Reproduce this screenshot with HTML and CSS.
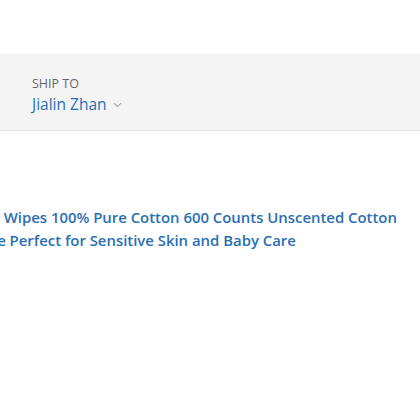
FILE: index.html
```html
<!DOCTYPE html>
<html>
<head>
<meta charset="utf-8">
<link rel="stylesheet" href="styles.css">
</head>
<body>
<header class="bar">
  <div class="ship">
    <div class="ship-label">SHIP TO</div>
    <div class="ship-name">Jialin Zhan <svg class="chev" width="9" height="6" viewBox="0 0 9 6"><path d="M1 1.2 L4.5 4.6 L8 1.2" fill="none" stroke="#9aa" stroke-width="1.1"/></svg></div>
  </div>
</header>
<main class="content">
  <div class="title">
    <div class="line l1">Cotton Wipes 100% Pure Cotton 600 Counts Unscented Cotton</div>
    <div class="line l2">Rounds Are Perfect for Sensitive Skin and Baby Care</div>
  </div>
</main>
</body>
</html>
```
FILE: styles.css
```css
html, body {
  margin: 0;
  padding: 0;
  background: #ffffff;
  overflow: hidden;
  width: 420px;
  height: 420px;
  font-family: "Open Sans", "Liberation Sans", sans-serif;
}
.bar {
  margin-top: 54px;
  height: 77px;
  background: #f4f4f4;
  border-bottom: 1px solid #e6e6e6;
  box-sizing: border-box;
  padding: 21px 0 0 32px;
}
.ship-label {
  font-size: 12.5px;
  color: #666;
  line-height: 18px;
  letter-spacing: 0;
}
.ship-name {
  font-size: 15.5px;
  color: #2a6fb5;
  line-height: 22px;
  font-weight: 500;
  display: flex;
  align-items: center;
  gap: 6px;
}
.chev { margin-top: 1px; }
.content {
  padding-top: 75px;
}
.line {
  white-space: nowrap;
  font-size: 14.9px;
  line-height: 23px;
  color: #2a6fb5;
  font-weight: 600;
}
.l1 { margin-left: -49px; }
.l2 { margin-left: -77px; }
```
